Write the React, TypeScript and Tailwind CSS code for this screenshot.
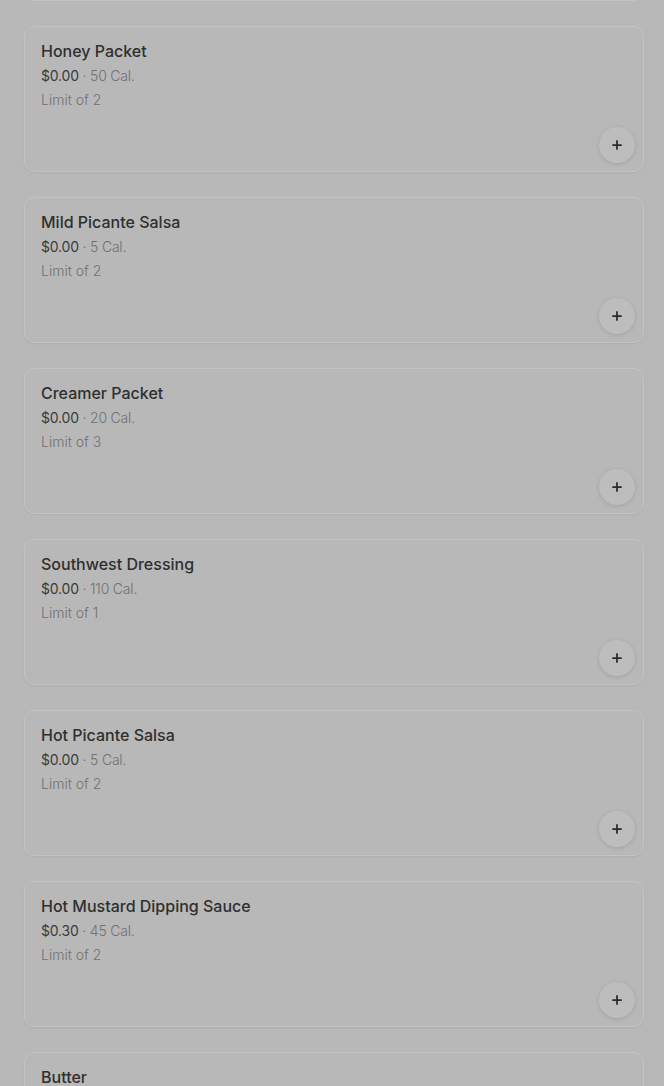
import { Plus } from "lucide-react"

const items = [
  { name: "Honey Packet", price: "$0.00", cal: "50 Cal.", limit: 2 },
  { name: "Mild Picante Salsa", price: "$0.00", cal: "5 Cal.", limit: 2 },
  { name: "Creamer Packet", price: "$0.00", cal: "20 Cal.", limit: 3 },
  { name: "Southwest Dressing", price: "$0.00", cal: "110 Cal.", limit: 1 },
  { name: "Hot Picante Salsa", price: "$0.00", cal: "5 Cal.", limit: 2 },
  { name: "Hot Mustard Dipping Sauce", price: "$0.30", cal: "45 Cal.", limit: 2 },
  { name: "Butter", price: "$0.00", cal: "35 Cal.", limit: 2 },
]

function ItemCard({ item }: { item: (typeof items)[number] }) {
  return (
    <div className="h-[146px] shrink-0 rounded-[10px] border border-[#c3c3c3] bg-[#b8b8b8] shadow-[0_1px_2px_rgba(0,0,0,0.06)] flex flex-col pl-[16px] pr-[8px] pt-[12px] pb-[8px]">
      <p className="text-[16px] leading-[24px] font-medium text-[#2f2f2f]">{item.name}</p>
      <p className="text-[14px] leading-[20px] mt-[3px] text-[#3b3b3b] tracking-[-0.2px]">
        {item.price}
        <span className="text-[#707070] font-light"> · {item.cal}</span>
      </p>
      <p className="text-[14px] leading-[20px] mt-[4px] text-[#717171] font-light">Limit of {item.limit}</p>
      <div className="mt-auto flex justify-end">
        <button className="w-9 h-9 rounded-full bg-[#bdbdbd] shadow-[0_1px_4px_rgba(0,0,0,0.12)] flex items-center justify-center">
          <Plus className="w-[14px] h-[14px] text-[#2a2a2a]" strokeWidth={3} />
        </button>
      </div>
    </div>
  )
}

export default function App() {
  return (
    <div
      className="h-[1086px] overflow-hidden bg-[#b8b8b8] pl-[24px] pr-[20px]"
      style={{ fontFamily: "Inter, 'Noto Sans', sans-serif" }}
    >
      <div className="flex flex-col gap-[25px] -mt-[145px]">
        <div className="h-[146px] shrink-0 rounded-[10px] border border-[#c3c3c3]" />
        {items.map((item) => (
          <ItemCard key={item.name} item={item} />
        ))}
      </div>
    </div>
  )
}
